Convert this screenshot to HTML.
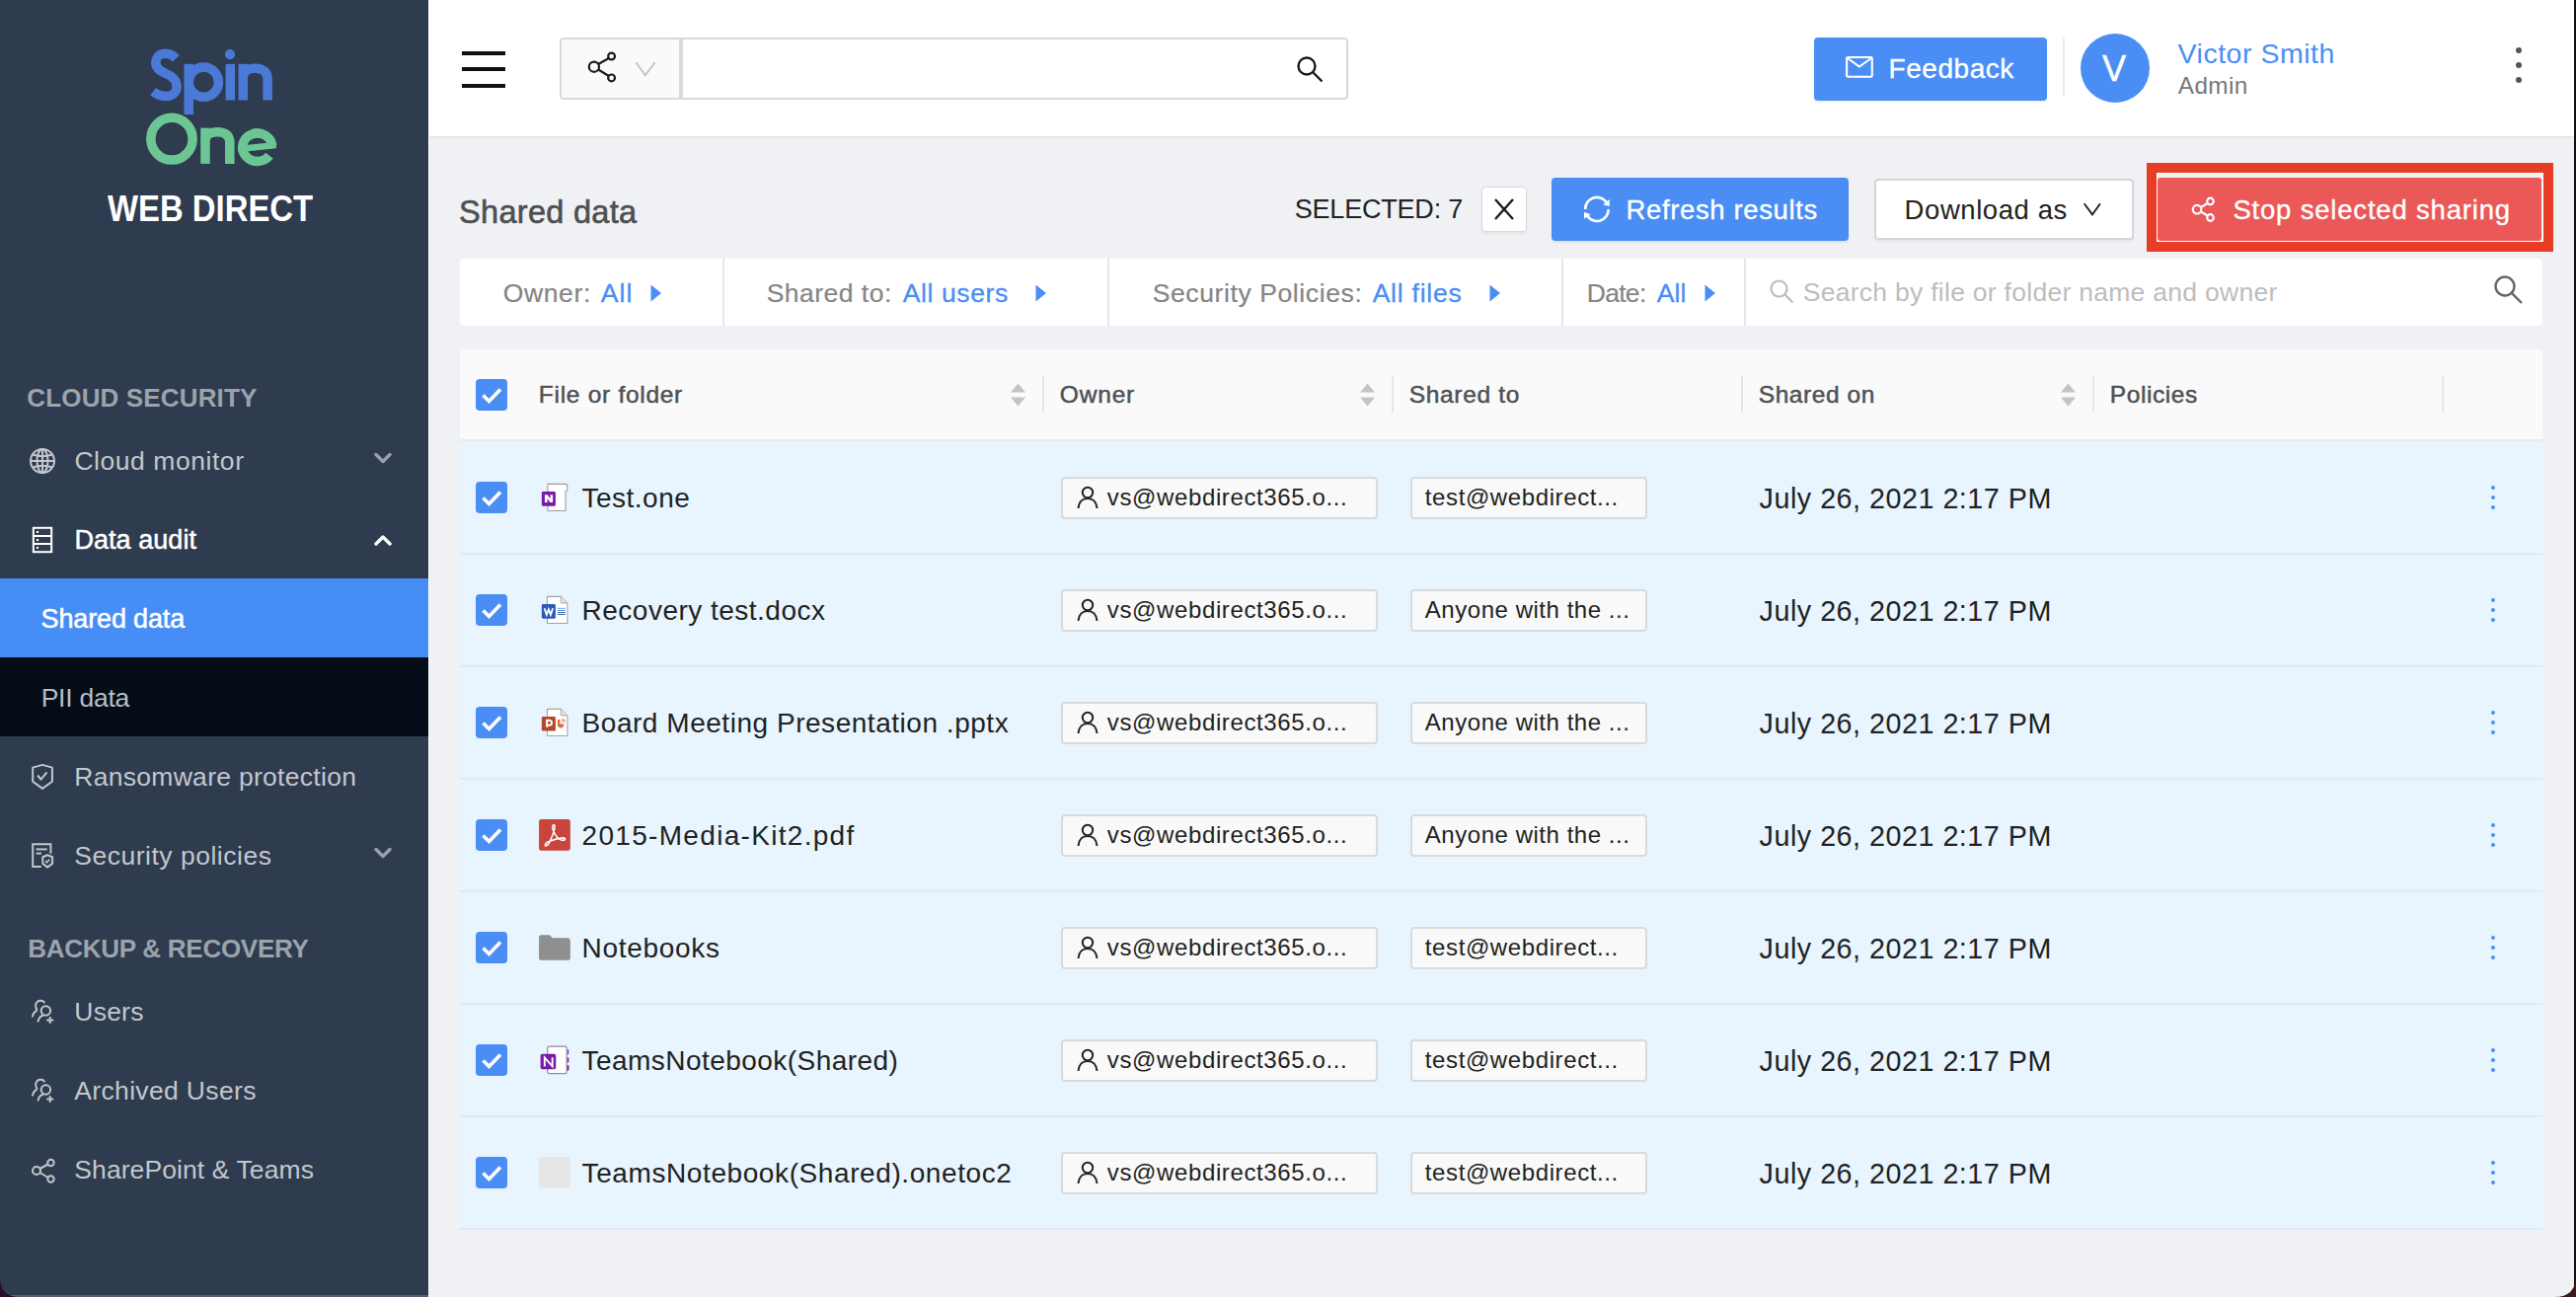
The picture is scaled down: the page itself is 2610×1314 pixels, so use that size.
<!DOCTYPE html>
<html><head><meta charset="utf-8"><style>
html,body{margin:0;padding:0;width:2610px;height:1314px;overflow:hidden;background:#f0f1f4;font-family:"Liberation Sans",sans-serif}
.t{position:absolute;white-space:pre}
.a{position:absolute}
</style></head><body>
<div style="position:absolute;left:0;top:0;width:434px;height:1314px;background:#2f3b4e"></div><div style="position:absolute;left:434px;top:0;width:1px;height:1314px;background:#fff"></div><div style="position:absolute;left:0;top:1312px;width:434px;height:2px;background:#56606e"></div><div style="position:absolute;left:0;top:586px;width:434px;height:80px;background:#468ef5"></div><div style="position:absolute;left:0;top:666px;width:434px;height:80px;background:#030c17"></div><div style="position:absolute;left:435px;top:0;width:2173px;height:138px;background:#fff;border-bottom:2px solid #e4e6ea"></div>
<div class="a" style="left:468px;top:51.5px;width:44px;height:4px;background:#111"></div><div class="a" style="left:468px;top:67.7px;width:44px;height:4px;background:#111"></div><div class="a" style="left:468px;top:84.6px;width:44px;height:4px;background:#111"></div><div class="a" style="left:567px;top:38px;width:799px;height:63px;box-sizing:border-box;border:2px solid #d9d9d9;border-radius:4px;background:#fff"></div><div class="a" style="left:569px;top:40px;width:120px;height:59px;background:#fafafa;border-radius:2px 0 0 2px"></div><div class="a" style="left:688px;top:40px;width:4px;height:59px;background:#dadada"></div><svg class="a" style="left:590px;top:48px;" width="40" height="40" viewBox="0 0 40 40"><g fill="none" stroke="#1a1a1a" stroke-width="2.2"><circle cx="29.6" cy="9" r="3.4"/><circle cx="11.9" cy="19.7" r="5.1"/><circle cx="29.6" cy="30.9" r="3.4"/><line x1="16.2" y1="17" x2="26.8" y2="11"/><line x1="16.2" y1="22.5" x2="26.8" y2="29"/></g></svg><svg class="a" style="left:640px;top:58px;" width="28" height="24" viewBox="0 0 28 24"><polyline points="4.3,5.3 13.8,18.3 23.6,5.3" fill="none" stroke="#c2c2c2" stroke-width="1.8"/></svg><svg class="a" style="left:1310px;top:53px;" width="36" height="36" viewBox="0 0 36 36"><g fill="none" stroke="#1a1a1a" stroke-width="2.4"><circle cx="14" cy="14" r="8.5"/><line x1="20" y1="20" x2="29.5" y2="29.5"/></g></svg><div class="a" style="left:1838px;top:38px;width:236px;height:64px;background:#4a8ef5;border-radius:4px;box-shadow:0 2px 2px rgba(0,0,0,0.06)"></div><svg class="a" style="left:1866px;top:53px;" width="36" height="30" viewBox="0 0 36 30"><rect x="5.1" y="5.05" width="25.7" height="19.7" rx="1.3" fill="none" stroke="#fff" stroke-width="2.1"/><polyline points="6,6 17.9,14.5 29.9,6" fill="none" stroke="#fff" stroke-width="2.1"/></svg><div class="a" style="left:2090px;top:38px;width:2px;height:59px;background:#ececec"></div><div class="a" style="left:2108px;top:34px;width:70px;height:70px;background:#4a8ef5;border-radius:50%"></div><div class="a" style="left:2549px;top:48px;width:6px;height:6px;background:#555;border-radius:50%"></div><div class="a" style="left:2549px;top:63px;width:6px;height:6px;background:#555;border-radius:50%"></div><div class="a" style="left:2549px;top:78px;width:6px;height:6px;background:#555;border-radius:50%"></div><div class="a" style="left:2608px;top:0px;width:2px;height:1314px;background:#111"></div><div class="a" style="left:1501px;top:188.5px;width:46px;height:46.5px;box-sizing:border-box;background:#fff;border:1.5px solid #d9d9d9;border-radius:4px;box-shadow:0 2px 3px rgba(0,0,0,0.05)"></div><svg class="a" style="left:1510px;top:198px;" width="28" height="28" viewBox="0 0 28 28"><g stroke="#1a1a1a" stroke-width="2.3" stroke-linecap="butt"><line x1="5" y1="4" x2="23" y2="24"/><line x1="23" y1="4" x2="5" y2="24"/></g></svg><div class="a" style="left:1572px;top:180px;width:301px;height:64px;background:#4a8ef5;border-radius:4px;box-shadow:0 2px 2px rgba(0,0,0,0.06)"></div><svg class="a" style="left:1590px;top:190px" width="50" height="45" viewBox="0 0 1441 1297"><g fill="none" stroke="#fff" stroke-width="76"><path d="M 467 632 A 338 338 0 0 1 1085 434"/><path d="M 1143 632 A 338 338 0 0 1 525 830"/></g><g fill="#fff"><polygon points="985,495 1175,345 1175,548"/><polygon points="432,715 630,790 432,910"/></g></svg><div class="a" style="left:1899px;top:180.5px;width:263px;height:62.5px;box-sizing:border-box;background:#fff;border:2px solid #d6d6d6;border-radius:4px;box-shadow:0 2px 2px rgba(0,0,0,0.04)"></div><svg class="a" style="left:2108px;top:202px;" width="26" height="22" viewBox="0 0 26 22"><polyline points="3.7,4.2 12,15.4 20,4.2" fill="none" stroke="#222" stroke-width="1.9"/></svg><div class="a" style="left:2175px;top:165px;width:412px;height:90px;box-sizing:border-box;border:10px solid #e73c26"></div><div class="a" style="left:2185px;top:175px;width:392px;height:70px;box-sizing:border-box;border:1px solid #fff"></div><div class="a" style="left:2186px;top:180px;width:389px;height:64px;background:#eb5858;border-radius:3px"></div><svg class="a" style="left:2216px;top:196px;" width="34" height="34" viewBox="0 0 34 34"><g fill="none" stroke="#fff" stroke-width="2.2"><circle cx="23.5" cy="8" r="3.3"/><circle cx="10" cy="16.2" r="4.3"/><circle cx="23.5" cy="24.5" r="3.3"/><line x1="13.8" y1="14" x2="20.8" y2="10"/><line x1="13.8" y1="18.5" x2="20.8" y2="22.5"/></g></svg><div class="a" style="left:466px;top:262px;width:2110px;height:68px;background:#fff;border-radius:4px"></div><div class="a" style="left:732px;top:262px;width:2px;height:68px;background:#e6e6e6"></div><div class="a" style="left:1122px;top:262px;width:2px;height:68px;background:#e6e6e6"></div><div class="a" style="left:1582px;top:262px;width:2px;height:68px;background:#e6e6e6"></div><div class="a" style="left:1767px;top:262px;width:2px;height:68px;background:#e6e6e6"></div><svg class="a" style="left:659px;top:288px;" width="12" height="18" viewBox="0 0 12 18"><path d="M0.5 0.5 L11 9 L0.5 17.5 Z" fill="#4a8ef5"/></svg><svg class="a" style="left:1049px;top:288px;" width="12" height="18" viewBox="0 0 12 18"><path d="M0.5 0.5 L11 9 L0.5 17.5 Z" fill="#4a8ef5"/></svg><svg class="a" style="left:1509px;top:288px;" width="12" height="18" viewBox="0 0 12 18"><path d="M0.5 0.5 L11 9 L0.5 17.5 Z" fill="#4a8ef5"/></svg><svg class="a" style="left:1727px;top:288px;" width="12" height="18" viewBox="0 0 12 18"><path d="M0.5 0.5 L11 9 L0.5 17.5 Z" fill="#4a8ef5"/></svg><svg class="a" style="left:1790px;top:280px;" width="32" height="32" viewBox="0 0 32 32"><g fill="none" stroke="#bdbdbd" stroke-width="2.2"><circle cx="12.5" cy="12.5" r="8"/><line x1="18.3" y1="18.3" x2="26.5" y2="26.5"/></g></svg><svg class="a" style="left:2524px;top:276px;" width="36" height="36" viewBox="0 0 36 36"><g fill="none" stroke="#666" stroke-width="2.4"><circle cx="14" cy="14" r="9.5"/><line x1="20.8" y1="20.8" x2="31" y2="31"/></g></svg><div class="a" style="left:466px;top:354px;width:2110px;height:92px;background:#fafafa;border-radius:2px 2px 0 0"></div><div class="a" style="left:466px;top:446px;width:2110px;height:799px;background:#e8f5fe"></div><div class="a" style="left:1056px;top:381px;width:2px;height:37px;background:#e6e6e6"></div><div class="a" style="left:1410px;top:381px;width:2px;height:37px;background:#e6e6e6"></div><div class="a" style="left:1764px;top:381px;width:2px;height:37px;background:#e6e6e6"></div><div class="a" style="left:2120px;top:381px;width:2px;height:37px;background:#e6e6e6"></div><div class="a" style="left:2474px;top:381px;width:2px;height:37px;background:#e6e6e6"></div><svg class="a" style="left:1023px;top:388px;" width="17" height="24" viewBox="0 0 17 24"><path d="M8.5 0.5 L16 9.5 L1 9.5 Z M8.5 23.5 L16 14.5 L1 14.5 Z" fill="#c4c4c4"/></svg><svg class="a" style="left:1377px;top:388px;" width="17" height="24" viewBox="0 0 17 24"><path d="M8.5 0.5 L16 9.5 L1 9.5 Z M8.5 23.5 L16 14.5 L1 14.5 Z" fill="#c4c4c4"/></svg><svg class="a" style="left:2087px;top:388px;" width="17" height="24" viewBox="0 0 17 24"><path d="M8.5 0.5 L16 9.5 L1 9.5 Z M8.5 23.5 L16 14.5 L1 14.5 Z" fill="#c4c4c4"/></svg><svg class="a" style="left:482px;top:384px;" width="32" height="32" viewBox="0 0 32 32"><rect x="0" y="0" width="32" height="32" rx="4" fill="#4a8ef5"/><polyline points="7.5,16.5 13.5,22.5 25,10.5" fill="none" stroke="#fff" stroke-width="3.6" stroke-linecap="butt"/></svg><div class="a" style="left:466px;top:445px;width:2110px;height:1.5px;background:#e9eaec"></div><svg class="a" style="left:482px;top:488px;" width="32" height="32" viewBox="0 0 32 32"><rect x="0" y="0" width="32" height="32" rx="4" fill="#4a8ef5"/><polyline points="7.5,16.5 13.5,22.5 25,10.5" fill="none" stroke="#fff" stroke-width="3.6" stroke-linecap="butt"/></svg><div class="a" style="left:466px;top:560px;width:2110px;height:2px;background:#dfeaf2"></div><div class="a" style="left:1075px;top:483px;width:321px;height:43px;box-sizing:border-box;background:#f9f9f9;border:2px solid #dadada;border-radius:4px"></div><div class="a" style="left:1429px;top:483px;width:240px;height:43px;box-sizing:border-box;background:#f9f9f9;border:2px solid #dadada;border-radius:4px"></div><svg class="a" style="left:1090px;top:492px;" width="24" height="24" viewBox="0 0 24 24"><g fill="none" stroke="#222" stroke-width="2"><circle cx="12" cy="7" r="5.2"/><path d="M2.5 23 C3 16.5 7 13 12 13 C17 13 21 16.5 21.5 23"/></g></svg><div class="a" style="left:2523.8px;top:491.8px;width:4.4px;height:4.4px;background:#4a8ef5;border-radius:50%"></div><div class="a" style="left:2523.8px;top:501.8px;width:4.4px;height:4.4px;background:#4a8ef5;border-radius:50%"></div><div class="a" style="left:2523.8px;top:511.8px;width:4.4px;height:4.4px;background:#4a8ef5;border-radius:50%"></div><svg class="a" style="left:540px;top:481px" width="45" height="45" viewBox="0 0 1297 1297"><path d="M430 270 H935 Q1000 275 1003 335 V445 Q1000 480 952 485 V1050 H430 Z" fill="#fff" stroke="#9a9a9a" stroke-width="30"/><rect x="255" y="490" width="405" height="425" rx="40" fill="#7719aa"/><path d="M345 810 V585 H425 L505 705 V585 H580 V810 H500 L420 690 V810 Z" fill="#fff"/></svg><svg class="a" style="left:482px;top:602px;" width="32" height="32" viewBox="0 0 32 32"><rect x="0" y="0" width="32" height="32" rx="4" fill="#4a8ef5"/><polyline points="7.5,16.5 13.5,22.5 25,10.5" fill="none" stroke="#fff" stroke-width="3.6" stroke-linecap="butt"/></svg><div class="a" style="left:466px;top:674px;width:2110px;height:2px;background:#dfeaf2"></div><div class="a" style="left:1075px;top:597px;width:321px;height:43px;box-sizing:border-box;background:#f9f9f9;border:2px solid #dadada;border-radius:4px"></div><div class="a" style="left:1429px;top:597px;width:240px;height:43px;box-sizing:border-box;background:#f9f9f9;border:2px solid #dadada;border-radius:4px"></div><svg class="a" style="left:1090px;top:606px;" width="24" height="24" viewBox="0 0 24 24"><g fill="none" stroke="#222" stroke-width="2"><circle cx="12" cy="7" r="5.2"/><path d="M2.5 23 C3 16.5 7 13 12 13 C17 13 21 16.5 21.5 23"/></g></svg><div class="a" style="left:2523.8px;top:605.8px;width:4.4px;height:4.4px;background:#4a8ef5;border-radius:50%"></div><div class="a" style="left:2523.8px;top:615.8px;width:4.4px;height:4.4px;background:#4a8ef5;border-radius:50%"></div><div class="a" style="left:2523.8px;top:625.8px;width:4.4px;height:4.4px;background:#4a8ef5;border-radius:50%"></div><svg class="a" style="left:540px;top:595px" width="45" height="45" viewBox="0 0 1297 1297"><path d="M415 270 H815 L1005 460 V1050 H415 Z" fill="#fff" stroke="#a3a3a3" stroke-width="30" stroke-linejoin="round"/><path d="M815 270 V460 H1005" fill="#e4e4e4" stroke="#a3a3a3" stroke-width="26" stroke-linejoin="round"/><rect x="255" y="490" width="405" height="425" rx="40" fill="#2b5bb8"/><path d="M335 612 L398 800 L457 645 L516 800 L580 612" fill="none" stroke="#fff" stroke-width="52" stroke-linejoin="miter"/><g stroke-width="28"><line x1="715" y1="615" x2="945" y2="615" stroke="#6aaae6"/><line x1="715" y1="675" x2="945" y2="675" stroke="#4f86d2"/><line x1="715" y1="735" x2="945" y2="735" stroke="#3d66b8"/><line x1="715" y1="790" x2="945" y2="790" stroke="#2d4d98"/></g></svg><svg class="a" style="left:482px;top:716px;" width="32" height="32" viewBox="0 0 32 32"><rect x="0" y="0" width="32" height="32" rx="4" fill="#4a8ef5"/><polyline points="7.5,16.5 13.5,22.5 25,10.5" fill="none" stroke="#fff" stroke-width="3.6" stroke-linecap="butt"/></svg><div class="a" style="left:466px;top:788px;width:2110px;height:2px;background:#dfeaf2"></div><div class="a" style="left:1075px;top:711px;width:321px;height:43px;box-sizing:border-box;background:#f9f9f9;border:2px solid #dadada;border-radius:4px"></div><div class="a" style="left:1429px;top:711px;width:240px;height:43px;box-sizing:border-box;background:#f9f9f9;border:2px solid #dadada;border-radius:4px"></div><svg class="a" style="left:1090px;top:720px;" width="24" height="24" viewBox="0 0 24 24"><g fill="none" stroke="#222" stroke-width="2"><circle cx="12" cy="7" r="5.2"/><path d="M2.5 23 C3 16.5 7 13 12 13 C17 13 21 16.5 21.5 23"/></g></svg><div class="a" style="left:2523.8px;top:719.8px;width:4.4px;height:4.4px;background:#4a8ef5;border-radius:50%"></div><div class="a" style="left:2523.8px;top:729.8px;width:4.4px;height:4.4px;background:#4a8ef5;border-radius:50%"></div><div class="a" style="left:2523.8px;top:739.8px;width:4.4px;height:4.4px;background:#4a8ef5;border-radius:50%"></div><svg class="a" style="left:540px;top:709px" width="45" height="45" viewBox="0 0 1297 1297"><path d="M415 270 H815 L1005 460 V1050 H415 Z" fill="#fff" stroke="#a3a3a3" stroke-width="30" stroke-linejoin="round"/><path d="M815 270 V460 H1005" fill="#e4e4e4" stroke="#a3a3a3" stroke-width="26" stroke-linejoin="round"/><rect x="255" y="491" width="405" height="420" rx="40" fill="#b7472a"/><path d="M408 800 V600 H468 Q548 600 548 672 Q548 745 468 745 H408" fill="none" stroke="#fff" stroke-width="58"/><path d="M720 580 V760 Q750 830 830 820 Q905 800 915 705 H790 V575 Q750 570 720 580 Z" fill="#e3673f"/><path d="M845 535 Q945 545 950 650 H845 Z" fill="#f3a58a"/></svg><svg class="a" style="left:482px;top:830px;" width="32" height="32" viewBox="0 0 32 32"><rect x="0" y="0" width="32" height="32" rx="4" fill="#4a8ef5"/><polyline points="7.5,16.5 13.5,22.5 25,10.5" fill="none" stroke="#fff" stroke-width="3.6" stroke-linecap="butt"/></svg><div class="a" style="left:466px;top:902px;width:2110px;height:2px;background:#dfeaf2"></div><div class="a" style="left:1075px;top:825px;width:321px;height:43px;box-sizing:border-box;background:#f9f9f9;border:2px solid #dadada;border-radius:4px"></div><div class="a" style="left:1429px;top:825px;width:240px;height:43px;box-sizing:border-box;background:#f9f9f9;border:2px solid #dadada;border-radius:4px"></div><svg class="a" style="left:1090px;top:834px;" width="24" height="24" viewBox="0 0 24 24"><g fill="none" stroke="#222" stroke-width="2"><circle cx="12" cy="7" r="5.2"/><path d="M2.5 23 C3 16.5 7 13 12 13 C17 13 21 16.5 21.5 23"/></g></svg><div class="a" style="left:2523.8px;top:833.8px;width:4.4px;height:4.4px;background:#4a8ef5;border-radius:50%"></div><div class="a" style="left:2523.8px;top:843.8px;width:4.4px;height:4.4px;background:#4a8ef5;border-radius:50%"></div><div class="a" style="left:2523.8px;top:853.8px;width:4.4px;height:4.4px;background:#4a8ef5;border-radius:50%"></div><svg class="a" style="left:540px;top:823px" width="45" height="45" viewBox="0 0 1297 1297"><rect x="175" y="200" width="915" height="920" rx="70" fill="#c9443b"/><path d="M605 365 C572 368 568 405 574 455 C582 525 640 640 720 740 C780 805 880 830 928 800 C958 772 930 742 880 746 C780 755 600 800 480 842 C392 880 342 930 360 972 C388 1000 440 950 480 880 C540 760 610 570 630 470 C644 400 640 362 605 365 Z" fill="none" stroke="#fff" stroke-width="44" stroke-linejoin="round"/></svg><svg class="a" style="left:482px;top:944px;" width="32" height="32" viewBox="0 0 32 32"><rect x="0" y="0" width="32" height="32" rx="4" fill="#4a8ef5"/><polyline points="7.5,16.5 13.5,22.5 25,10.5" fill="none" stroke="#fff" stroke-width="3.6" stroke-linecap="butt"/></svg><div class="a" style="left:466px;top:1016px;width:2110px;height:2px;background:#dfeaf2"></div><div class="a" style="left:1075px;top:939px;width:321px;height:43px;box-sizing:border-box;background:#f9f9f9;border:2px solid #dadada;border-radius:4px"></div><div class="a" style="left:1429px;top:939px;width:240px;height:43px;box-sizing:border-box;background:#f9f9f9;border:2px solid #dadada;border-radius:4px"></div><svg class="a" style="left:1090px;top:948px;" width="24" height="24" viewBox="0 0 24 24"><g fill="none" stroke="#222" stroke-width="2"><circle cx="12" cy="7" r="5.2"/><path d="M2.5 23 C3 16.5 7 13 12 13 C17 13 21 16.5 21.5 23"/></g></svg><div class="a" style="left:2523.8px;top:947.8px;width:4.4px;height:4.4px;background:#4a8ef5;border-radius:50%"></div><div class="a" style="left:2523.8px;top:957.8px;width:4.4px;height:4.4px;background:#4a8ef5;border-radius:50%"></div><div class="a" style="left:2523.8px;top:967.8px;width:4.4px;height:4.4px;background:#4a8ef5;border-radius:50%"></div><svg class="a" style="left:540px;top:937px" width="45" height="45" viewBox="0 0 1297 1297"><path d="M175 370 Q175 295 250 295 H480 L575 385 H1010 Q1090 385 1090 465 V955 Q1090 1030 1015 1030 H250 Q175 1030 175 955 Z" fill="#8f8f8f"/></svg><svg class="a" style="left:482px;top:1058px;" width="32" height="32" viewBox="0 0 32 32"><rect x="0" y="0" width="32" height="32" rx="4" fill="#4a8ef5"/><polyline points="7.5,16.5 13.5,22.5 25,10.5" fill="none" stroke="#fff" stroke-width="3.6" stroke-linecap="butt"/></svg><div class="a" style="left:466px;top:1130px;width:2110px;height:2px;background:#dfeaf2"></div><div class="a" style="left:1075px;top:1053px;width:321px;height:43px;box-sizing:border-box;background:#f9f9f9;border:2px solid #dadada;border-radius:4px"></div><div class="a" style="left:1429px;top:1053px;width:240px;height:43px;box-sizing:border-box;background:#f9f9f9;border:2px solid #dadada;border-radius:4px"></div><svg class="a" style="left:1090px;top:1062px;" width="24" height="24" viewBox="0 0 24 24"><g fill="none" stroke="#222" stroke-width="2"><circle cx="12" cy="7" r="5.2"/><path d="M2.5 23 C3 16.5 7 13 12 13 C17 13 21 16.5 21.5 23"/></g></svg><div class="a" style="left:2523.8px;top:1061.8px;width:4.4px;height:4.4px;background:#4a8ef5;border-radius:50%"></div><div class="a" style="left:2523.8px;top:1071.8px;width:4.4px;height:4.4px;background:#4a8ef5;border-radius:50%"></div><div class="a" style="left:2523.8px;top:1081.8px;width:4.4px;height:4.4px;background:#4a8ef5;border-radius:50%"></div><svg class="a" style="left:540px;top:1051px" width="45" height="45" viewBox="0 0 1297 1297"><rect x="425" y="265" width="560" height="790" rx="50" fill="#fff" stroke="#8f8f8f" stroke-width="35"/><path d="M1000 345 H1020 Q1050 345 1050 375 V470 Q1050 500 1020 500 H1000 Z" fill="#a24fd8"/><path d="M1000 585 H1020 Q1050 585 1050 615 V705 Q1050 735 1020 735 H1000 Z" fill="#8b32c4"/><path d="M1000 810 H1020 Q1050 810 1050 840 V940 Q1050 970 1020 970 H1000 Z" fill="#7719aa"/><rect x="220" y="480" width="450" height="450" rx="50" fill="#7719aa"/><path d="M340 850 V590 L568 845 V585" fill="none" stroke="#fff" stroke-width="55" stroke-linejoin="miter"/></svg><svg class="a" style="left:482px;top:1172px;" width="32" height="32" viewBox="0 0 32 32"><rect x="0" y="0" width="32" height="32" rx="4" fill="#4a8ef5"/><polyline points="7.5,16.5 13.5,22.5 25,10.5" fill="none" stroke="#fff" stroke-width="3.6" stroke-linecap="butt"/></svg><div class="a" style="left:466px;top:1244px;width:2110px;height:2px;background:#dfeaf2"></div><div class="a" style="left:1075px;top:1167px;width:321px;height:43px;box-sizing:border-box;background:#f9f9f9;border:2px solid #dadada;border-radius:4px"></div><div class="a" style="left:1429px;top:1167px;width:240px;height:43px;box-sizing:border-box;background:#f9f9f9;border:2px solid #dadada;border-radius:4px"></div><svg class="a" style="left:1090px;top:1176px;" width="24" height="24" viewBox="0 0 24 24"><g fill="none" stroke="#222" stroke-width="2"><circle cx="12" cy="7" r="5.2"/><path d="M2.5 23 C3 16.5 7 13 12 13 C17 13 21 16.5 21.5 23"/></g></svg><div class="a" style="left:2523.8px;top:1175.8px;width:4.4px;height:4.4px;background:#4a8ef5;border-radius:50%"></div><div class="a" style="left:2523.8px;top:1185.8px;width:4.4px;height:4.4px;background:#4a8ef5;border-radius:50%"></div><div class="a" style="left:2523.8px;top:1195.8px;width:4.4px;height:4.4px;background:#4a8ef5;border-radius:50%"></div><svg class="a" style="left:540px;top:1165px" width="45" height="45" viewBox="0 0 1297 1297"><rect x="173" y="202" width="922" height="922" rx="70" fill="#e6e6e6"/></svg><svg class="a" style="left:28px;top:452px;" width="30" height="30" viewBox="0 0 30 30"><g fill="none" stroke="#c3c7cd" stroke-width="2"><circle cx="15" cy="15" r="12"/><ellipse cx="15" cy="15" rx="5.5" ry="12"/><line x1="15" y1="3" x2="15" y2="27"/><line x1="3" y1="15" x2="27" y2="15"/><path d="M5 8.5 Q15 12 25 8.5"/><path d="M5 21.5 Q15 18 25 21.5"/></g></svg><svg class="a" style="left:379px;top:458px;" width="18" height="13" viewBox="0 0 18 13"><polyline points="2,2.5 9,9.5 16,2.5" fill="none" stroke="#9aa0a8" stroke-width="3.4" stroke-linecap="round" stroke-linejoin="round"/></svg><svg class="a" style="left:31px;top:532px;" width="24" height="30" viewBox="0 0 24 30"><g fill="none" stroke="#fff" stroke-width="2"><rect x="2.8" y="2.8" width="18.4" height="24.4"/><line x1="3" y1="11" x2="21" y2="11"/><line x1="3" y1="19" x2="21" y2="19"/></g><g fill="#fff"><rect x="6" y="6" width="2" height="2"/><rect x="6" y="14" width="2" height="2"/><rect x="6" y="22" width="2" height="2"/></g></svg><svg class="a" style="left:379px;top:541px;" width="18" height="13" viewBox="0 0 18 13"><polyline points="2,10 9,3 16,10" fill="none" stroke="#fff" stroke-width="3.4" stroke-linecap="round" stroke-linejoin="round"/></svg><svg class="a" style="left:26px;top:770px;" width="34" height="34" viewBox="0 0 34 34"><g fill="none" stroke="#c3c7cd" stroke-width="2" stroke-linejoin="round"><path d="M17 4.9 L26.9 7.6 V21.7 L17 28.9 L7.2 21.7 V7.6 Z"/><polyline points="12.1,15.5 15.5,19.7 21.5,12.3"/></g></svg><svg class="a" style="left:26px;top:850px;" width="34" height="34" viewBox="0 0 34 34"><g fill="none" stroke="#c3c7cd" stroke-width="2"><path d="M15.8 27.9 H7.2 V5.3 H25.4 V14.8"/><line x1="10.6" y1="10.4" x2="21.7" y2="10.4"/><line x1="10.6" y1="14.6" x2="16" y2="14.6"/><path d="M22.2 16.3 L27.1 18.3 V24.9 L22.2 28.6 L17.3 24.9 V18.3 Z" stroke-linejoin="round"/><polyline points="20.2,22 21.5,23.7 24.4,20.5" stroke-width="1.6"/></g></svg><svg class="a" style="left:379px;top:858px;" width="18" height="13" viewBox="0 0 18 13"><polyline points="2,2.5 9,9.5 16,2.5" fill="none" stroke="#9aa0a8" stroke-width="3.4" stroke-linecap="round" stroke-linejoin="round"/></svg><svg class="a" style="left:28px;top:1008px;" width="32" height="32" viewBox="0 0 32 32"><g fill="none" stroke="#c3c7cd" stroke-width="2"><path d="M17.3 8.1 C15.5 5.3, 12 5.2, 10 6.8 C7.5 8.8, 7.6 12.8, 9.8 15.3"/><path d="M9.6 15.8 C7.3 16.6, 5.5 19.2, 4.8 22.4"/><circle cx="18.4" cy="16" r="4.7"/><path d="M15.8 20.7 C13 21.3, 11 24, 10.4 27.4"/><line x1="19.2" y1="25.5" x2="26.2" y2="25.5"/><line x1="22.7" y1="22.1" x2="22.7" y2="28.9"/></g></svg><svg class="a" style="left:28px;top:1088px;" width="32" height="32" viewBox="0 0 32 32"><g fill="none" stroke="#c3c7cd" stroke-width="2"><path d="M17.3 8.1 C15.5 5.3, 12 5.2, 10 6.8 C7.5 8.8, 7.6 12.8, 9.8 15.3"/><path d="M9.6 15.8 C7.3 16.6, 5.5 19.2, 4.8 22.4"/><circle cx="18.4" cy="16" r="4.7"/><path d="M15.8 20.7 C13 21.3, 11 24, 10.4 27.4"/><line x1="19.2" y1="25.5" x2="26.2" y2="25.5"/><line x1="22.7" y1="22.1" x2="22.7" y2="28.9"/></g></svg><svg class="a" style="left:30px;top:1172px;" width="28" height="28" viewBox="0 0 28 28"><g fill="none" stroke="#c3c7cd" stroke-width="2"><circle cx="21.5" cy="6" r="3.2"/><circle cx="7" cy="14" r="4"/><circle cx="21.5" cy="22.5" r="3.2"/><line x1="10.5" y1="12" x2="18.7" y2="7.5"/><line x1="10.5" y1="16" x2="18.7" y2="21"/></g></svg><svg class="a" style="left:0px;top:1294px;" width="20" height="20" viewBox="0 0 20 20"><path d="M0 0 V20 H20 Q0 20 0 0 Z" fill="#2a0d28"/></svg><svg class="a" style="left:2588px;top:1292px;" width="22" height="22" viewBox="0 0 22 22"><path d="M22 0 V22 H0 Q22 22 22 0 Z" fill="#3b181c"/></svg><svg class="a" style="left:140px;top:40px" width="150" height="140" viewBox="0 0 1390 1297"><g fill="none" stroke-linecap="butt">
<g stroke="#4b79d8" stroke-width="88">
<path d="M 355 178 C 320 140, 285 132, 255 132 C 200 132, 165 170, 165 220 C 165 275, 215 300, 265 322 C 330 350, 362 385, 362 442 C 362 500, 318 532, 262 532 C 215 532, 175 515, 140 488"/>
<circle cx="615" cy="400" r="140"/>
<line x1="475" y1="230" x2="475" y2="705"/>
<line x1="865" y1="230" x2="865" y2="570"/>
<line x1="985" y1="230" x2="985" y2="570"/>
<path d="M 985 360 C 985 300, 1040 270, 1100 270 C 1170 270, 1215 305, 1215 370 L 1215 570"/>
</g>
<circle cx="862" cy="140" r="47" fill="#4b79d8" stroke="none"/>
<g stroke="#6cc693" stroke-width="88">
<ellipse cx="315" cy="933" rx="196" ry="198"/>
<line x1="630" y1="830" x2="630" y2="1167"/>
<path d="M 630 950 C 630 895, 685 868, 745 868 C 815 868, 860 900, 860 965 L 860 1167"/>
<path d="M 1258 995 A 140 132 0 1 0 1232 1090"/>
</g>
<path d="M 972 1055 L 1296 1022 L 1296 962 L 972 995 Z" fill="#6cc693" stroke="none"/>
</g></svg>
<div class="t" style="left:108.9px;top:193.8px;font-size:36px;line-height:36px;color:#ffffff;font-weight:700;letter-spacing:0.000px;transform:scaleX(0.9130);transform-origin:0 0;">WEB DIRECT</div><div class="t" style="left:27.3px;top:390.0px;font-size:26px;line-height:26px;color:#9ca3ad;font-weight:700;letter-spacing:0.149px;">CLOUD SECURITY</div><div class="t" style="left:75.4px;top:453.6px;font-size:26.5px;line-height:26.5px;color:#c3c7cd;font-weight:400;letter-spacing:0.552px;">Cloud monitor</div><div class="t" style="left:75.4px;top:534.4px;font-size:27px;line-height:27px;color:#ffffff;font-weight:400;letter-spacing:0.058px;-webkit-text-stroke:0.5px #ffffff;">Data audit</div><div class="t" style="left:41.6px;top:613.9px;font-size:27px;line-height:27px;color:#ffffff;font-weight:400;letter-spacing:-0.150px;-webkit-text-stroke:0.5px #ffffff;">Shared data</div><div class="t" style="left:41.7px;top:693.6px;font-size:26.5px;line-height:26.5px;color:#b9bdc3;font-weight:400;letter-spacing:-0.251px;">PII data</div><div class="t" style="left:75.3px;top:773.6px;font-size:26.5px;line-height:26.5px;color:#c3c7cd;font-weight:400;letter-spacing:0.287px;">Ransomware protection</div><div class="t" style="left:75.3px;top:853.6px;font-size:26.5px;line-height:26.5px;color:#c3c7cd;font-weight:400;letter-spacing:0.508px;">Security policies</div><div class="t" style="left:28.3px;top:948.0px;font-size:26px;line-height:26px;color:#9ca3ad;font-weight:700;letter-spacing:-0.274px;">BACKUP & RECOVERY</div><div class="t" style="left:75.3px;top:1011.6px;font-size:26.5px;line-height:26.5px;color:#c3c7cd;font-weight:400;letter-spacing:0.222px;">Users</div><div class="t" style="left:75.3px;top:1092.1px;font-size:26.5px;line-height:26.5px;color:#c3c7cd;font-weight:400;letter-spacing:0.340px;">Archived Users</div><div class="t" style="left:75.3px;top:1171.6px;font-size:26.5px;line-height:26.5px;color:#c3c7cd;font-weight:400;letter-spacing:0.088px;">SharePoint &amp; Teams</div><div class="t" style="left:1913.6px;top:56.3px;font-size:28px;line-height:28px;color:#ffffff;font-weight:400;letter-spacing:0.530px;-webkit-text-stroke:0.35px #ffffff;">Feedback</div><div class="t" style="left:2129.7px;top:51.9px;font-size:36px;line-height:36px;color:#ffffff;font-weight:400;letter-spacing:0.000px;-webkit-text-stroke:0.4px #ffffff;transform:scaleX(1.0060);transform-origin:0 0;">V</div><div class="t" style="left:2206.6px;top:40.4px;font-size:28.5px;line-height:28.5px;color:#4a8ef5;font-weight:400;letter-spacing:0.509px;">Victor Smith</div><div class="t" style="left:2206.8px;top:75.4px;font-size:24.3px;line-height:24.3px;color:#777777;font-weight:400;letter-spacing:0.396px;">Admin</div><div class="t" style="left:465.1px;top:198.5px;font-size:32.5px;line-height:32.5px;color:#4d4f52;font-weight:400;letter-spacing:0.286px;-webkit-text-stroke:0.6px #4d4f52;">Shared data</div><div class="t" style="left:1311.7px;top:199.1px;font-size:27px;line-height:27px;color:#222222;font-weight:400;letter-spacing:-0.194px;">SELECTED: 7</div><div class="t" style="left:1647.6px;top:198.7px;font-size:27.5px;line-height:27.5px;color:#ffffff;font-weight:400;letter-spacing:0.622px;-webkit-text-stroke:0.35px #ffffff;">Refresh results</div><div class="t" style="left:1929.6px;top:198.9px;font-size:27.5px;line-height:27.5px;color:#222222;font-weight:400;letter-spacing:0.567px;">Download as</div><div class="t" style="left:2262.4px;top:198.7px;font-size:27.5px;line-height:27.5px;color:#ffffff;font-weight:400;letter-spacing:0.808px;-webkit-text-stroke:0.35px #ffffff;">Stop selected sharing</div><div class="t" style="left:509.7px;top:283.6px;font-size:26.5px;line-height:26.5px;color:#858585;font-weight:400;letter-spacing:0.634px;-webkit-text-stroke:0.2px #858585;">Owner:</div><div class="t" style="left:608.7px;top:283.6px;font-size:26.5px;line-height:26.5px;color:#4a8ef5;font-weight:400;letter-spacing:1.068px;-webkit-text-stroke:0.3px #4a8ef5;">All</div><div class="t" style="left:776.7px;top:283.6px;font-size:26.5px;line-height:26.5px;color:#858585;font-weight:400;letter-spacing:0.479px;-webkit-text-stroke:0.2px #858585;">Shared to:</div><div class="t" style="left:914.7px;top:283.6px;font-size:26.5px;line-height:26.5px;color:#4a8ef5;font-weight:400;letter-spacing:0.621px;-webkit-text-stroke:0.3px #4a8ef5;">All users</div><div class="t" style="left:1167.7px;top:283.6px;font-size:26.5px;line-height:26.5px;color:#858585;font-weight:400;letter-spacing:0.607px;-webkit-text-stroke:0.2px #858585;">Security Policies:</div><div class="t" style="left:1390.7px;top:283.6px;font-size:26.5px;line-height:26.5px;color:#4a8ef5;font-weight:400;letter-spacing:0.755px;-webkit-text-stroke:0.3px #4a8ef5;">All files</div><div class="t" style="left:1607.7px;top:283.6px;font-size:26.5px;line-height:26.5px;color:#858585;font-weight:400;letter-spacing:-0.688px;-webkit-text-stroke:0.2px #858585;">Date:</div><div class="t" style="left:1678.7px;top:283.6px;font-size:26.5px;line-height:26.5px;color:#4a8ef5;font-weight:400;letter-spacing:0.068px;-webkit-text-stroke:0.3px #4a8ef5;">All</div><div class="t" style="left:1826.7px;top:283.3px;font-size:26.5px;line-height:26.5px;color:#bdbdbd;font-weight:400;letter-spacing:0.281px;">Search by file or folder name and owner</div><div class="t" style="left:545.8px;top:387.7px;font-size:24.5px;line-height:24.5px;color:#4f5154;font-weight:400;letter-spacing:0.715px;-webkit-text-stroke:0.5px #4f5154;">File or folder</div><div class="t" style="left:1073.8px;top:387.7px;font-size:24.5px;line-height:24.5px;color:#4f5154;font-weight:400;letter-spacing:0.825px;-webkit-text-stroke:0.5px #4f5154;">Owner</div><div class="t" style="left:1427.8px;top:387.7px;font-size:24.5px;line-height:24.5px;color:#4f5154;font-weight:400;letter-spacing:0.652px;-webkit-text-stroke:0.5px #4f5154;">Shared to</div><div class="t" style="left:1781.8px;top:387.7px;font-size:24.5px;line-height:24.5px;color:#4f5154;font-weight:400;letter-spacing:0.551px;-webkit-text-stroke:0.5px #4f5154;">Shared on</div><div class="t" style="left:2137.8px;top:387.7px;font-size:24.5px;line-height:24.5px;color:#4f5154;font-weight:400;letter-spacing:0.576px;-webkit-text-stroke:0.5px #4f5154;">Policies</div><div class="t" style="left:589.6px;top:491.3px;font-size:28px;line-height:28px;color:#222222;font-weight:400;letter-spacing:0.474px;">Test.one</div><div class="t" style="left:1121.8px;top:492.4px;font-size:24px;line-height:24px;color:#222222;font-weight:400;letter-spacing:0.621px;">vs@webdirect365.o...</div><div class="t" style="left:1443.8px;top:492.4px;font-size:24px;line-height:24px;color:#222222;font-weight:400;letter-spacing:0.605px;">test@webdirect...</div><div class="t" style="left:1782.6px;top:490.7px;font-size:28.7px;line-height:28.7px;color:#222222;font-weight:400;letter-spacing:0.513px;">July 26, 2021 2:17 PM</div><div class="t" style="left:589.6px;top:605.3px;font-size:28px;line-height:28px;color:#222222;font-weight:400;letter-spacing:0.487px;">Recovery test.docx</div><div class="t" style="left:1121.8px;top:606.4px;font-size:24px;line-height:24px;color:#222222;font-weight:400;letter-spacing:0.621px;">vs@webdirect365.o...</div><div class="t" style="left:1443.8px;top:606.4px;font-size:24px;line-height:24px;color:#222222;font-weight:400;letter-spacing:0.538px;">Anyone with the ...</div><div class="t" style="left:1782.6px;top:604.7px;font-size:28.7px;line-height:28.7px;color:#222222;font-weight:400;letter-spacing:0.513px;">July 26, 2021 2:17 PM</div><div class="t" style="left:589.6px;top:719.3px;font-size:28px;line-height:28px;color:#222222;font-weight:400;letter-spacing:0.532px;">Board Meeting Presentation .pptx</div><div class="t" style="left:1121.8px;top:720.4px;font-size:24px;line-height:24px;color:#222222;font-weight:400;letter-spacing:0.621px;">vs@webdirect365.o...</div><div class="t" style="left:1443.8px;top:720.4px;font-size:24px;line-height:24px;color:#222222;font-weight:400;letter-spacing:0.538px;">Anyone with the ...</div><div class="t" style="left:1782.6px;top:718.7px;font-size:28.7px;line-height:28.7px;color:#222222;font-weight:400;letter-spacing:0.513px;">July 26, 2021 2:17 PM</div><div class="t" style="left:589.6px;top:833.3px;font-size:28px;line-height:28px;color:#222222;font-weight:400;letter-spacing:1.307px;">2015-Media-Kit2.pdf</div><div class="t" style="left:1121.8px;top:834.4px;font-size:24px;line-height:24px;color:#222222;font-weight:400;letter-spacing:0.621px;">vs@webdirect365.o...</div><div class="t" style="left:1443.8px;top:834.4px;font-size:24px;line-height:24px;color:#222222;font-weight:400;letter-spacing:0.538px;">Anyone with the ...</div><div class="t" style="left:1782.6px;top:832.7px;font-size:28.7px;line-height:28.7px;color:#222222;font-weight:400;letter-spacing:0.513px;">July 26, 2021 2:17 PM</div><div class="t" style="left:589.6px;top:947.3px;font-size:28px;line-height:28px;color:#222222;font-weight:400;letter-spacing:0.688px;">Notebooks</div><div class="t" style="left:1121.8px;top:948.4px;font-size:24px;line-height:24px;color:#222222;font-weight:400;letter-spacing:0.621px;">vs@webdirect365.o...</div><div class="t" style="left:1443.8px;top:948.4px;font-size:24px;line-height:24px;color:#222222;font-weight:400;letter-spacing:0.605px;">test@webdirect...</div><div class="t" style="left:1782.6px;top:946.7px;font-size:28.7px;line-height:28.7px;color:#222222;font-weight:400;letter-spacing:0.513px;">July 26, 2021 2:17 PM</div><div class="t" style="left:589.6px;top:1061.3px;font-size:28px;line-height:28px;color:#222222;font-weight:400;letter-spacing:0.450px;">TeamsNotebook(Shared)</div><div class="t" style="left:1121.8px;top:1062.4px;font-size:24px;line-height:24px;color:#222222;font-weight:400;letter-spacing:0.621px;">vs@webdirect365.o...</div><div class="t" style="left:1443.8px;top:1062.4px;font-size:24px;line-height:24px;color:#222222;font-weight:400;letter-spacing:0.605px;">test@webdirect...</div><div class="t" style="left:1782.6px;top:1060.7px;font-size:28.7px;line-height:28.7px;color:#222222;font-weight:400;letter-spacing:0.513px;">July 26, 2021 2:17 PM</div><div class="t" style="left:589.6px;top:1175.3px;font-size:28px;line-height:28px;color:#222222;font-weight:400;letter-spacing:0.593px;">TeamsNotebook(Shared).onetoc2</div><div class="t" style="left:1121.8px;top:1176.4px;font-size:24px;line-height:24px;color:#222222;font-weight:400;letter-spacing:0.621px;">vs@webdirect365.o...</div><div class="t" style="left:1443.8px;top:1176.4px;font-size:24px;line-height:24px;color:#222222;font-weight:400;letter-spacing:0.605px;">test@webdirect...</div><div class="t" style="left:1782.6px;top:1174.7px;font-size:28.7px;line-height:28.7px;color:#222222;font-weight:400;letter-spacing:0.513px;">July 26, 2021 2:17 PM</div>
</body></html>
